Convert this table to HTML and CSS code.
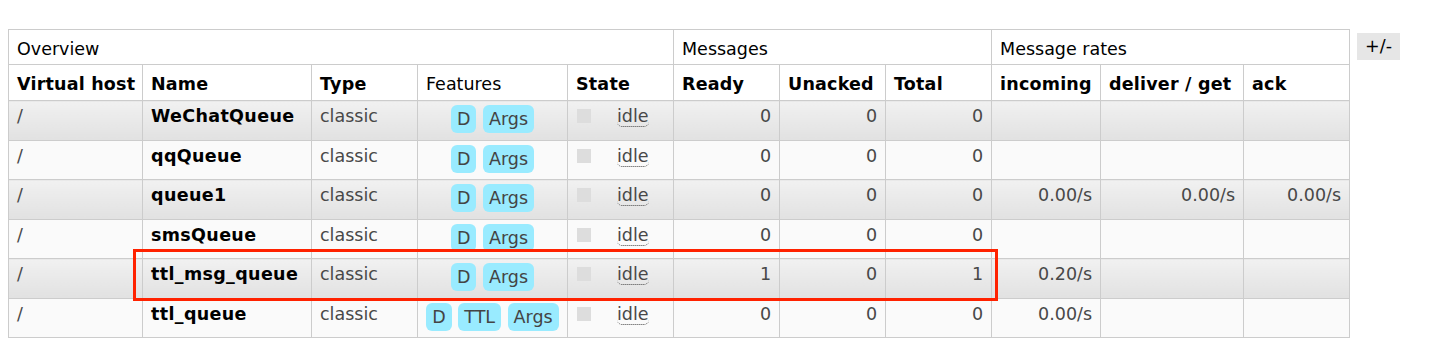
FILE: index.html
```html
<!DOCTYPE html>
<html lang="en">
<head>
<meta charset="utf-8">
<title>Queues</title>
<link rel="stylesheet" href="styles.css">
</head>
<body>
<div class="page">
  <div class="queues">
    <table class="list">
      <colgroup>
        <col class="w-vh"><col class="w-name"><col class="w-type"><col class="w-feat"><col class="w-state">
        <col class="w-num"><col class="w-num"><col class="w-num">
        <col class="w-in"><col class="w-del"><col class="w-ack">
      </colgroup>
      <thead>
        <tr class="group">
          <th colspan="5">Overview</th>
          <th colspan="3">Messages</th>
          <th colspan="3">Message rates</th>
        </tr>
        <tr class="cols">
          <th>Virtual host</th><th>Name</th><th>Type</th><th class="plain">Features</th><th>State</th>
          <th>Ready</th><th>Unacked</th><th>Total</th>
          <th>incoming</th><th>deliver / get</th><th>ack</th>
        </tr>
      </thead>
      <tbody>
        <tr class="alt1">
          <td>/</td><td class="name">WeChatQueue</td><td>classic</td>
          <td class="feat"><div class="badges"><span class="badge">D</span><span class="badge">Args</span></div></td>
          <td><div class="state"><span class="dot"></span><span class="idle">idle</span></div></td>
          <td class="r">0</td><td class="r">0</td><td class="r">0</td>
          <td class="r"></td><td class="r"></td><td class="r"></td>
        </tr>
        <tr class="alt2">
          <td>/</td><td class="name">qqQueue</td><td>classic</td>
          <td class="feat"><div class="badges"><span class="badge">D</span><span class="badge">Args</span></div></td>
          <td><div class="state"><span class="dot"></span><span class="idle">idle</span></div></td>
          <td class="r">0</td><td class="r">0</td><td class="r">0</td>
          <td class="r"></td><td class="r"></td><td class="r"></td>
        </tr>
        <tr class="alt1">
          <td>/</td><td class="name">queue1</td><td>classic</td>
          <td class="feat"><div class="badges"><span class="badge">D</span><span class="badge">Args</span></div></td>
          <td><div class="state"><span class="dot"></span><span class="idle">idle</span></div></td>
          <td class="r">0</td><td class="r">0</td><td class="r">0</td>
          <td class="r">0.00/s</td><td class="r">0.00/s</td><td class="r">0.00/s</td>
        </tr>
        <tr class="alt2">
          <td>/</td><td class="name">smsQueue</td><td>classic</td>
          <td class="feat"><div class="badges"><span class="badge">D</span><span class="badge">Args</span></div></td>
          <td><div class="state"><span class="dot"></span><span class="idle">idle</span></div></td>
          <td class="r">0</td><td class="r">0</td><td class="r">0</td>
          <td class="r"></td><td class="r"></td><td class="r"></td>
        </tr>
        <tr class="alt1">
          <td>/</td><td class="name">ttl_msg_queue</td><td>classic</td>
          <td class="feat"><div class="badges"><span class="badge">D</span><span class="badge">Args</span></div></td>
          <td><div class="state"><span class="dot"></span><span class="idle">idle</span></div></td>
          <td class="r">1</td><td class="r">0</td><td class="r">1</td>
          <td class="r">0.20/s</td><td class="r"></td><td class="r"></td>
        </tr>
        <tr class="alt2">
          <td>/</td><td class="name">ttl_queue</td><td>classic</td>
          <td class="feat"><div class="badges"><span class="badge">D</span><span class="badge">TTL</span><span class="badge">Args</span></div></td>
          <td><div class="state"><span class="dot"></span><span class="idle">idle</span></div></td>
          <td class="r">0</td><td class="r">0</td><td class="r">0</td>
          <td class="r">0.00/s</td><td class="r"></td><td class="r"></td>
        </tr>
      </tbody>
    </table>
    <span class="toggle">+/-</span>
  </div>
  <div class="highlight"></div>
</div>
</body>
</html>
```

FILE: styles.css
```css
html, body {
  margin: 0;
  padding: 0;
  background: #fff;
}

body {
  padding: 8px;
  font-family: "DejaVu Sans", Verdana, sans-serif;
  font-size: 17.5px;
  color: #484848;
}

.page {
  position: relative;
  padding-top: 21px;
}

.queues {
  display: flex;
  align-items: flex-start;
  gap: 7px;
}

table.list {
  border-collapse: collapse;
  table-layout: fixed;
  width: 1342px;
  border: 1px solid #ccc;
  flex: none;
}

.w-vh { width: 134px; }
.w-name { width: 169px; }
.w-type { width: 106px; }
.w-feat { width: 150px; }
.w-state { width: 106px; }
.w-num { width: 106px; }
.w-in { width: 109px; }
.w-del { width: 143px; }
.w-ack { width: 106px; }

table.list th,
table.list td {
  border: 1px solid #ccc;
  line-height: 20px;
  white-space: nowrap;
  overflow: hidden;
}

table.list th {
  text-align: left;
  color: #000;
  vertical-align: bottom;
  padding: 0 8px 5px;
  background: #fff;
}

tr.group th {
  font-weight: normal;
  height: 35px;
  box-sizing: border-box;
}

tr.cols th {
  font-weight: bold;
  letter-spacing: 0.2px;
  height: 36px;
  box-sizing: border-box;
  padding-bottom: 6px;
}

tr.cols th.plain {
  font-weight: normal;
  letter-spacing: 0;
}

table.list td {
  vertical-align: top;
  padding: 5px 8px 0;
  height: 39.5px;
  box-sizing: border-box;
}

tr.alt1 td {
  background: linear-gradient(#f1f1f1, #e1e1e1);
}

tr.alt2 td {
  background: #fafafa;
}

td.name {
  font-weight: bold;
  letter-spacing: 0.35px;
  color: #000;
}

td.r {
  text-align: right;
}

table.list td.feat {
  padding: 4px 4px 0;
}

.badges {
  display: flex;
  justify-content: center;
  gap: 6.5px;
}

.badge {
  display: block;
  height: 28px;
  box-sizing: border-box;
  padding: 1px 6px 0;
  line-height: 27px;
  background: #99ebff;
  color: #444;
  border-radius: 6px;
}

.state {
  display: flex;
  align-items: flex-start;
  padding-left: 1px;
}

.dot {
  width: 14px;
  height: 14px;
  margin-top: 3px;
  background: #dddddd;
  flex: none;
}

.idle {
  margin-left: 26px;
  display: block;
  line-height: 20px;
  border-bottom: 1px dotted #444;
  border-radius: 0 0 5px 5px;
}

.toggle {
  margin-top: 4px;
  display: block;
  height: 27px;
  box-sizing: border-box;
  padding: 0 8px;
  line-height: 27px;
  background: #e6e6e6;
  color: #000;
}

.highlight {
  position: absolute;
  left: 125px;
  top: 241px;
  width: 865px;
  height: 52px;
  box-sizing: border-box;
  border: 3px solid #ff2200;
  pointer-events: none;
}
```
